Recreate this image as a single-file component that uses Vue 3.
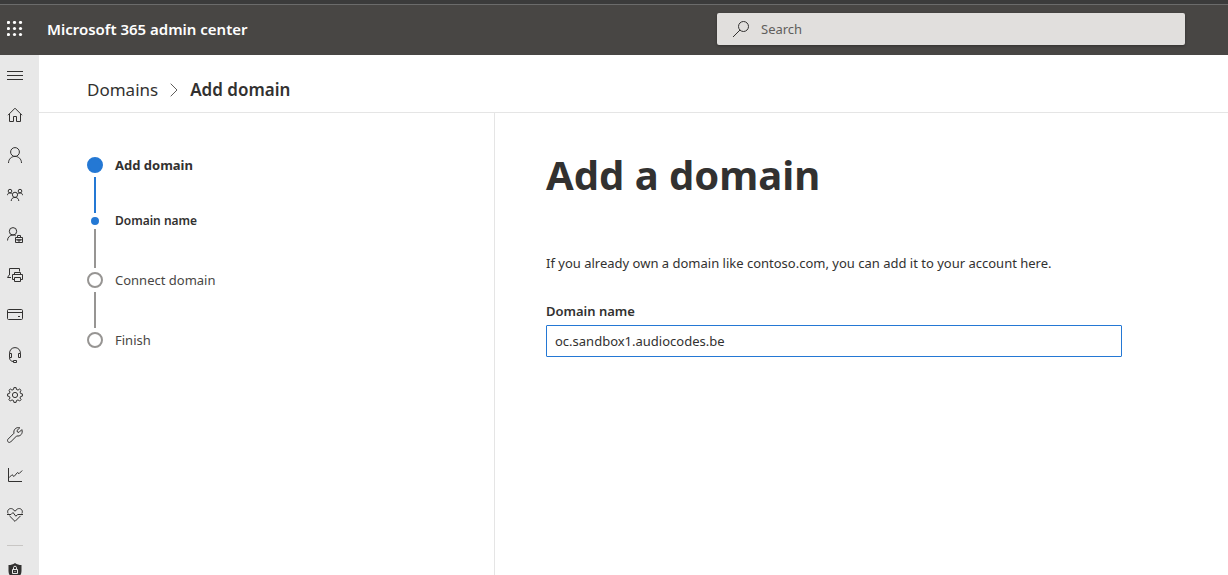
<script setup>
import { ref } from 'vue'

const domain = ref('oc.sandbox1.audiocodes.be')
const search = ref('')

const navItems = [
  { label: 'Collapse navigation', d: 'M0 4.5H16M0 8.5H16M0 12.5H16' },
  { label: 'Home', d: 'M1 8.2L8 1.2L15 8.2M2.5 7V14.5H6.5V9.5H9.5V14.5H13.5V7' },
  { label: 'Users', d: 'M8 .6A4.4 4.4 0 1 1 8 9.4A4.4 4.4 0 1 1 8 .6M1.5 16C1.5 12 4.5 9.4 8 9.4S14.5 12 14.5 16' },
  { label: 'Teams and groups', d: 'M8 5.2A2.6 2.6 0 1 1 8 10.4A2.6 2.6 0 1 1 8 5.2M4.2 14C4.2 12 5.6 10.4 8 10.4S11.8 12 11.8 14M3 2.3A1.8 1.8 0 1 1 3 5.9A1.8 1.8 0 1 1 3 2.3M13 2.3A1.8 1.8 0 1 1 13 5.9A1.8 1.8 0 1 1 13 2.3M.4 8.2C.6 6.6 1.6 5.9 3 5.9C4.2 5.9 5 6.4 5.6 7.2M15.6 8.2C15.4 6.6 14.4 5.9 13 5.9C11.8 5.9 11 6.4 10.4 7.2' },
  { label: 'Roles', d: 'M6 .6A3.7 3.7 0 1 1 6 8A3.7 3.7 0 1 1 6 .6M.5 13.5C.5 10.3 3 8 6 8C7.2 8 8 8.3 8.8 8.8M8.5 10.5H15.5V15.5H8.5ZM10.5 10.5V8.5H13.5V10.5M8.5 12.8H15.5M11 12V14H13V12' },
  { label: 'Resources', d: 'M2.5 8V1.5H12.5V4.5M2.5 7.5L.5 10.5H4M7.5 7.5V5.5H13.5V7.5M7 12.5H5.5V7.5H15.5V12.5H14M7.5 10.5H13.5V14.5H7.5Z' },
  { label: 'Billing', d: 'M.5 3.5C.5 2.9.9 2.5 1.5 2.5H14.5C15.1 2.5 15.5 2.9 15.5 3.5V11.5C15.5 12.1 15.1 12.5 14.5 12.5H1.5C.9 12.5.5 12.1.5 11.5ZM.5 5.5H15.5M11 9.5H13' },
  { label: 'Support', d: 'M2.5 6.5C2.5 3 4.8.6 8 .6S13.5 3 13.5 6.5M2.5 6.5H4.5V10.5H2.5ZM11.5 6.5H13.5V10.5H11.5ZM2.5 10.5C2.5 13 4 14.5 6.5 14.5M6.5 13.5H9.5V15.5H6.5Z' },
  { label: 'Settings', d: 'M6.9.6H9.1L9.5 2.5L11 3.1L12.7 2L14.1 3.4L13 5L13.6 6.5L15.4 6.9V9.1L13.6 9.5L13 11L14.1 12.6L12.7 14L11 12.9L9.5 13.5L9.1 15.4H6.9L6.5 13.5L5 12.9L3.3 14L1.9 12.6L3 11L2.4 9.5L.6 9.1V6.9L2.4 6.5L3 5L1.9 3.4L3.3 2L5 3.1L6.5 2.5ZM8 5.4A2.6 2.6 0 1 1 8 10.6A2.6 2.6 0 1 1 8 5.4' },
  { label: 'Setup', d: 'M14.8 2.6L12 5.4L10.4 5L10 3.5L12.8.8C9.2-.3 6.1 2.8 7 6.2L.9 12.3C-.5 14.1 1.8 16.4 3.6 15L9.7 8.9C13.2 9.9 16.4 6.4 14.8 2.6Z' },
  { label: 'Reports', d: 'M1.5 1V14.5H15M2 10.7L5 7.7L7 9.5L10.5 5.5L12 6.7L15.2 3.5' },
  { label: 'Health', d: 'M1.1 6.5C-.5 3.3 2.5.4 5.6 2L8 4.2L10.4 2C13.5.4 16.5 3.3 14.9 6.5M2.4 8.8L8 14.4L13.6 8.8M0 7.5H4L6 5.5L8.8 9.2L10.8 7.5H16' }
]

const steps = [
  { label: 'Add domain', state: 'current' },
  { label: 'Domain name', state: 'sub' },
  { label: 'Connect domain', state: 'todo' },
  { label: 'Finish', state: 'todo' }
]
</script>

<template>
  <div class="page">
    <header class="topbar">
      <button class="launcher" type="button" aria-label="App launcher">
        <svg width="16" height="16" viewBox="0 0 16 16" aria-hidden="true">
          <template v-for="y in 3" :key="y">
            <circle v-for="x in 3" :key="x" :cx="x * 6 - 4.5" :cy="y * 6 - 4.5" r="1.6" />
          </template>
        </svg>
      </button>
      <a class="brand" href="#">Microsoft 365 admin center</a>
      <label class="search">
        <svg width="18" height="18" viewBox="0 0 18 18" aria-hidden="true">
          <circle cx="11.5" cy="6.5" r="5" />
          <path d="M8 10L1 17" />
        </svg>
        <input v-model="search" type="text" placeholder="Search" aria-label="Search" />
      </label>
    </header>

    <div class="body">
      <nav class="rail" aria-label="Main">
        <button v-for="item in navItems" :key="item.label" class="rail-item" type="button" :aria-label="item.label">
          <svg width="16" height="16" viewBox="0 0 16 16" aria-hidden="true"><path :d="item.d" /></svg>
        </button>
        <hr class="rail-rule" />
        <button class="rail-item" type="button" aria-label="Security">
          <svg class="shield" width="16" height="16" viewBox="0 0 16 16" aria-hidden="true">
            <path class="solid" d="M8 0C10 1.5 12 2 14.5 2V8C14.5 12 12 14.5 8 16C4 14.5 1.5 12 1.5 8V2C4 2 6 1.5 8 0Z" />
            <path class="lock" d="M5.5 6.5H10.5V10.5H5.5ZM6.5 6.5V4.5C6.5 2.8 9.5 2.8 9.5 4.5V6.5M7.5 8.5H8.5" />
          </svg>
        </button>
      </nav>

      <div class="content">
        <nav class="crumbs" aria-label="Breadcrumb">
          <a href="#">Domains</a>
          <svg width="8" height="14" viewBox="0 0 8 14" aria-hidden="true"><path d="M.7.7L7 7L.7 13.3" /></svg>
          <span class="here">Add domain</span>
        </nav>

        <div class="columns">
          <ol class="steps">
            <li v-for="step in steps" :key="step.label" :class="['step', step.state]">
              <span class="track"><span class="dot"></span><span class="line"></span></span>
              <span class="step-label">{{ step.label }}</span>
            </li>
          </ol>

          <main class="main">
            <h1>Add a domain</h1>
            <p>If you already own a domain like contoso.com, you can add it to your account here.</p>
            <label for="domain">Domain name</label>
            <input id="domain" v-model="domain" class="field" type="text" spellcheck="false" />
          </main>
        </div>
      </div>
    </div>
  </div>
</template>

<style>
body {
  margin: 0;
}
</style>

<style scoped>
.page {
  display: flex;
  flex-direction: column;
  height: 100vh;
  overflow: hidden;
  color: #323130;
  background: #fff;
  font-family: "Segoe UI", "Noto Sans", "Open Sans", sans-serif;
  font-size: 13px;
  line-height: 20px;
}
.page * {
  box-sizing: border-box;
}
button {
  padding: 0;
  border: 0;
  background: none;
}
input {
  font: inherit;
  color: inherit;
}
a {
  color: inherit;
  text-decoration: none;
}
svg {
  display: block;
  flex: none;
  fill: none;
  stroke: #323130;
}
.topbar {
  display: flex;
  flex: none;
  align-items: center;
  height: 55px;
  padding: 4px 43px 1px 7px;
  background: linear-gradient(#3b3b3b 4px, #6b6b6b 4px, #6b6b6b 5px, #484644 5px);
}
.launcher svg {
  fill: #fff;
  stroke: none;
}
.brand {
  margin-left: 24px;
  color: #fff;
  font-size: 15px;
  font-weight: 600;
  white-space: nowrap;
}
.search {
  display: flex;
  align-items: center;
  gap: 11px;
  width: 468px;
  height: 32px;
  margin-left: auto;
  padding: 0 15px;
  border-radius: 2px;
  background: #e1dfdd;
  box-shadow: 0 1px 3px rgba(0, 0, 0, 0.3);
}
.search input {
  flex: 1;
  min-width: 0;
  padding: 0;
  border: 0;
  outline: 0;
  background: none;
}
.search input::placeholder {
  color: #605e5c;
  opacity: 1;
}
.body {
  display: flex;
  flex: 1;
  min-height: 0;
}
.rail {
  flex: none;
  width: 39px;
  overflow: hidden;
  background: #e8e8e8;
}
.rail-item {
  display: flex;
  align-items: center;
  width: 100%;
  height: 40px;
  padding-left: 7px;
}
.rail-rule {
  width: 16px;
  height: 1px;
  margin: 10px 0 5px 7px;
  border: 0;
  background: #c8c6c4;
}
.shield .solid {
  fill: #323130;
  stroke: none;
}
.shield .lock {
  stroke: #e8e8e8;
}
.content {
  display: flex;
  flex: 1;
  flex-direction: column;
  min-width: 0;
}
.crumbs {
  display: flex;
  flex: none;
  align-items: center;
  gap: 12px;
  height: 58px;
  padding: 12px 48px 0;
  border-bottom: 1px solid #e5e5e5;
  font-size: 17px;
  line-height: 24px;
}
.crumbs svg {
  stroke: #605e5c;
}
.here {
  font-weight: 600;
}
.columns {
  display: flex;
  flex: 1;
  min-height: 0;
}
.steps {
  flex: none;
  width: 456px;
  margin: 0;
  padding: 44px 48px;
  border-right: 1px solid #e5e5e5;
  list-style: none;
}
.step {
  display: flex;
  gap: 12px;
  height: 60px;
  color: #484644;
}
.track {
  display: flex;
  flex-direction: column;
  align-items: center;
  gap: 4px;
  width: 16px;
}
.dot {
  flex: none;
  width: 16px;
  height: 16px;
  border: 2px solid #979593;
  border-radius: 50%;
}
.line {
  flex: 1;
  width: 2px;
  margin-bottom: 4px;
  background: #979593;
}
.step:last-child .line {
  display: none;
}
.step-label {
  height: 16px;
  line-height: 16px;
}
.current,
.sub {
  color: #323130;
  font-weight: 700;
}
.current .dot,
.current .line,
.sub .dot {
  border-color: #2478d4;
  background: #2478d4;
}
.sub {
  height: 55px;
  font-size: 12px;
  font-weight: 600;
}
.sub .dot {
  width: 8px;
  height: 8px;
}
.sub .step-label {
  height: 8px;
  line-height: 8px;
}
.current {
  height: 60px;
}
.main {
  flex: 1;
  min-width: 0;
  padding: 36px 106px 0 51px;
}
h1 {
  margin: 0 0 52px;
  font-size: 40px;
  font-weight: 700;
  line-height: 52px;
}
p {
  margin: 0 0 28px;
}
.main label {
  display: block;
  margin-bottom: 4px;
  font-weight: 600;
}
.field {
  display: block;
  width: 100%;
  height: 32px;
  padding: 0 8px;
  border: 1px solid #2478d4;
  border-radius: 1px;
  outline: 0;
  background: #fff;
}
</style>
